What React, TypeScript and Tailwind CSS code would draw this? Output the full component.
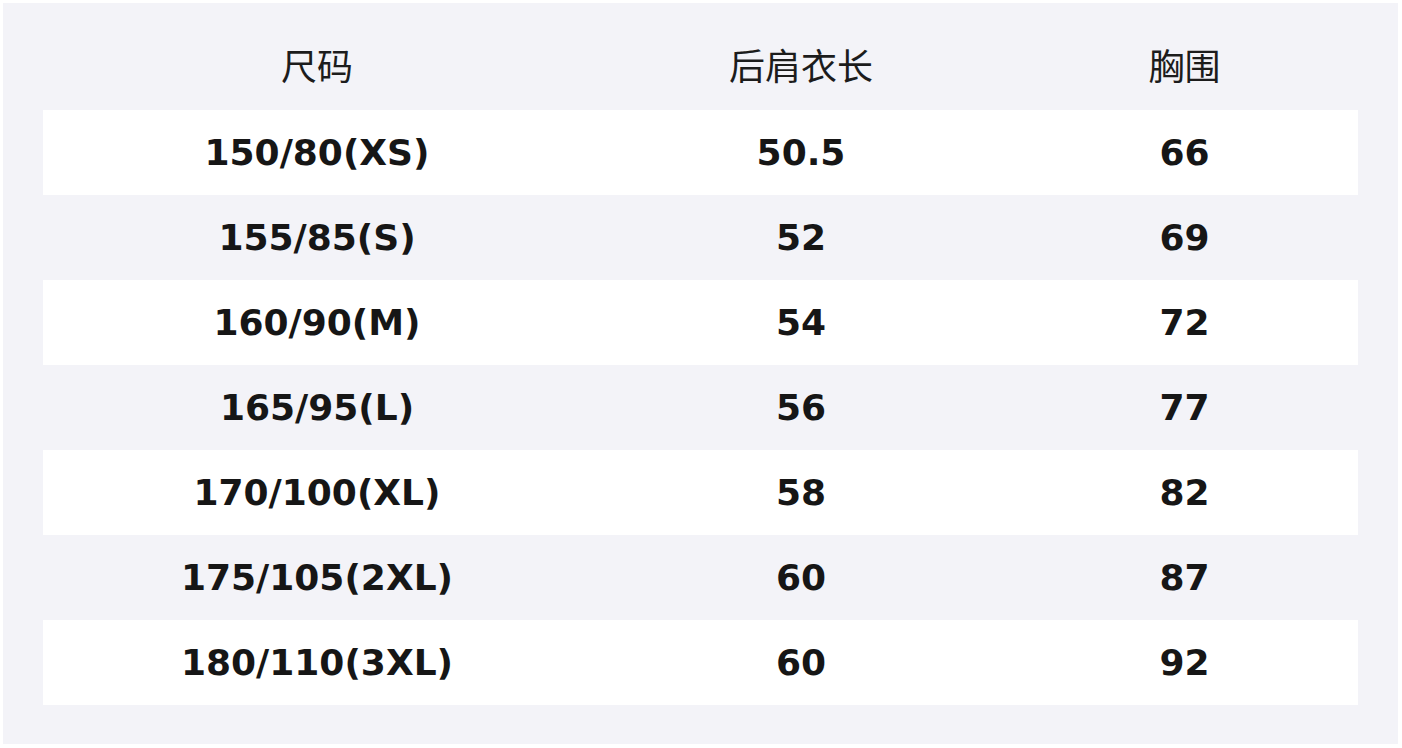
const rows = [
  ['150/80(XS)', '50.5', '66'],
  ['155/85(S)', '52', '69'],
  ['160/90(M)', '54', '72'],
  ['165/95(L)', '56', '77'],
  ['170/100(XL)', '58', '82'],
  ['175/105(2XL)', '60', '87'],
  ['180/110(3XL)', '60', '92'],
];

const headers = ['尺码', '后肩衣长', '胸围'];

export default function App() {
  return (
    <div className="w-[1402px] h-[748px] bg-white p-[3px]">
      <div className="h-[741px] w-[1395px] bg-[#f3f3f8] px-10 pb-10">
        <div className="grid grid-cols-[548px_420px_347px] h-[107px] items-center pt-[14px] font-['Noto_Sans_CJK_SC',sans-serif] text-[36px] text-[#1c1c1c]">
          {headers.map((h) => (
            <div key={h} className="text-center leading-none">
              {h}
            </div>
          ))}
        </div>
        <div className="font-['DejaVu_Sans',sans-serif] font-bold text-[36px] text-[#161616]">
          {rows.map((r, i) => (
            <div
              key={r[0]}
              className={
                i % 2 === 0
                  ? 'grid grid-cols-[548px_420px_347px] h-[85px] items-center bg-white'
                  : 'grid grid-cols-[548px_420px_347px] h-[85px] items-center'
              }
            >
              {r.map((c, j) => (
                <div key={j} className="text-center leading-none">
                  {c}
                </div>
              ))}
            </div>
          ))}
        </div>
      </div>
    </div>
  );
}
